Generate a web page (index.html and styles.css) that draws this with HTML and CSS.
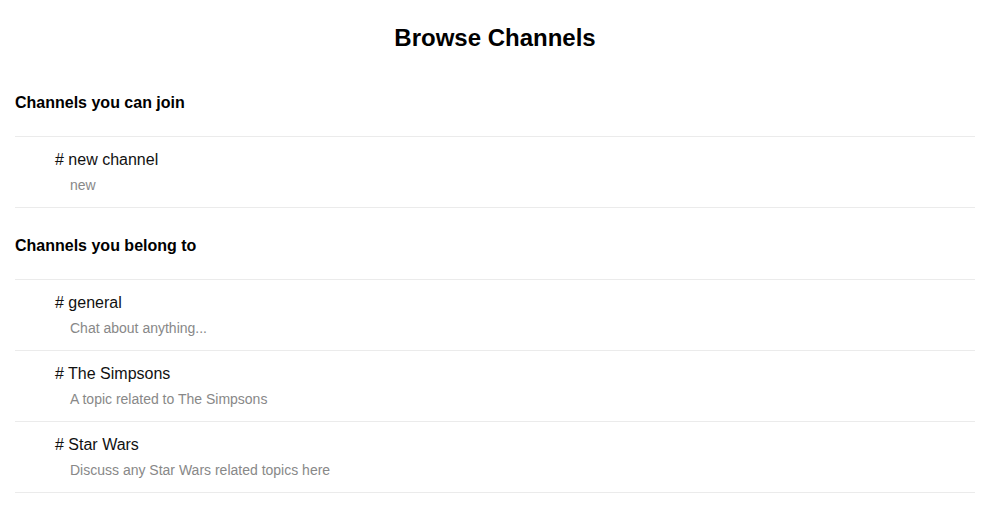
FILE: index.html
```html
<!DOCTYPE html>
<html>
<head>
<meta charset="utf-8">
<title>Browse Channels</title>
<link rel="stylesheet" href="styles.css">
</head>
<body>
<div class="page">
  <h1 class="title">Browse Channels</h1>
  <section class="section first">
    <h2 class="section-title">Channels you can join</h2>
    <ul class="channel-list">
      <li class="channel">
        <div class="channel-name"># new channel</div>
        <div class="channel-desc">new</div>
      </li>
    </ul>
  </section>
  <section class="section">
    <h2 class="section-title">Channels you belong to</h2>
    <ul class="channel-list">
      <li class="channel">
        <div class="channel-name"># general</div>
        <div class="channel-desc">Chat about anything...</div>
      </li>
      <li class="channel">
        <div class="channel-name"># The Simpsons</div>
        <div class="channel-desc">A topic related to The Simpsons</div>
      </li>
      <li class="channel">
        <div class="channel-name"># Star Wars</div>
        <div class="channel-desc">Discuss any Star Wars related topics here</div>
      </li>
    </ul>
  </section>
</div>
</body>
</html>
```
FILE: styles.css
```css
html, body {
  margin: 0;
  padding: 0;
  background: #fff;
}
body {
  font-family: "Liberation Sans", Arial, sans-serif;
  color: #111;
}
.page {
  padding: 0 16px 0 15px;
}
.title {
  margin: 24px 0 13px;
  font-size: 24px;
  line-height: 28px;
  font-weight: bold;
  text-align: center;
  color: #000;
}
.section-title {
  margin: 0;
  padding: 29px 0 24px;
  font-size: 16px;
  line-height: 18px;
  font-weight: bold;
  color: #000;
}
.channel-list {
  list-style: none;
  margin: 0;
  padding: 0;
  border-top: 1px solid #ebebeb;
}
.channel {
  padding: 14px 0 14px 40px;
  border-bottom: 1px solid #ebebeb;
}
.channel-name {
  font-size: 16px;
  line-height: 18px;
  color: #111;
}
.channel-desc {
  margin-top: 8px;
  padding-left: 15px;
  font-size: 14px;
  line-height: 16px;
  color: #888;
}
```
